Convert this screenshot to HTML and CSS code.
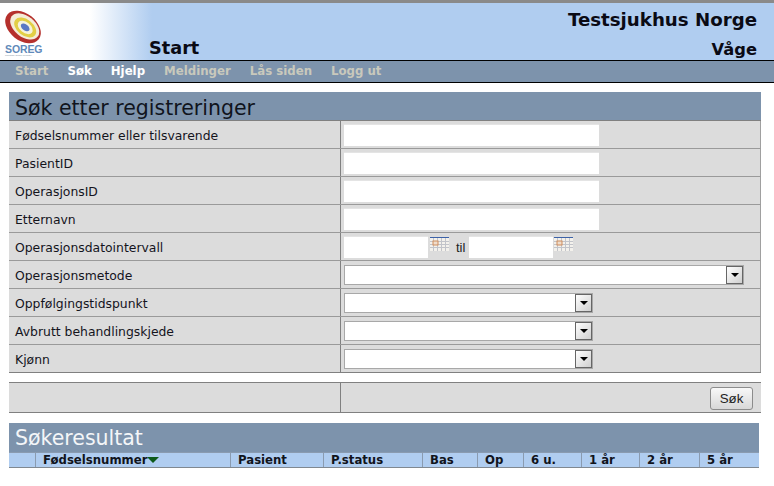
FILE: index.html
```html
<!DOCTYPE html>
<html lang="no">
<head>
<meta charset="utf-8">
<title>Søk</title>
<link rel="stylesheet" href="styles.css">
</head>
<body>
<header class="top">
  <div class="brand">
    <svg class="logo" width="38" height="34" viewBox="0 0 38 34">
      <g transform="rotate(38 18 17)">
        <ellipse cx="18" cy="17" rx="20" ry="13.5" fill="#b5302c"/>
        <ellipse cx="19" cy="15.5" rx="16.5" ry="10.5" fill="#f4ecd8"/>
        <ellipse cx="20" cy="16" rx="12.5" ry="8" fill="#e2cf45"/>
        <ellipse cx="20" cy="16" rx="8.5" ry="5.3" fill="#f6f3dc"/>
        <ellipse cx="20" cy="16" rx="5" ry="3" fill="#5a78c4"/>
      </g>
    </svg>
    <div class="soreg">SOREG</div>
    <div class="soreg-sub">Swedish Organ Registry</div>
  </div>
  <div class="page-title">Start</div>
  <div class="site">
    <div class="hospital">Testsjukhus Norge</div>
    <div class="place">Våge</div>
  </div>
</header>
<nav class="nav">
  <a class="off">Start</a><a>Søk</a><a>Hjelp</a><a class="off">Meldinger</a><a class="off">Lås siden</a><a class="off">Logg ut</a>
</nav>
<main class="main">
  <section class="panel">
    <h1 class="title dark">Søk etter registreringer</h1>
    <div class="row"><div class="label">Fødselsnummer eller tilsvarende</div><div class="field"><span class="input"></span></div></div>
    <div class="row"><div class="label">PasientID</div><div class="field"><span class="input"></span></div></div>
    <div class="row"><div class="label">OperasjonsID</div><div class="field"><span class="input"></span></div></div>
    <div class="row"><div class="label">Etternavn</div><div class="field"><span class="input"></span></div></div>
    <div class="row"><div class="label">Operasjonsdatointervall</div><div class="field">
      <span class="input date"></span>
      <svg class="cal" width="19" height="14" viewBox="0 0 19 14"><rect width="19" height="1" fill="#3c62a8"/><rect y="1" width="19" height="13" fill="#f3f1ec"/><path d="M0 4.5h19M0 7.5h19M0 10.5h19M3.5 1v13M7.5 1v13M11.5 1v13M15.5 1v13" stroke="#c2c4ca"/><rect x="3" y="4" width="5" height="4" fill="#efdccb" stroke="#cf8d5c"/></svg>
      <span class="til">til</span>
      <span class="input date"></span>
      <svg class="cal cal-end" width="19" height="14" viewBox="0 0 19 14"><rect width="19" height="1" fill="#3c62a8"/><rect y="1" width="19" height="13" fill="#f3f1ec"/><path d="M0 4.5h19M0 7.5h19M0 10.5h19M3.5 1v13M7.5 1v13M11.5 1v13M15.5 1v13" stroke="#c2c4ca"/><rect x="3" y="4" width="5" height="4" fill="#efdccb" stroke="#cf8d5c"/></svg>
    </div></div>
    <div class="row"><div class="label">Operasjonsmetode</div><div class="field"><div class="select wide"><span class="sel-text"></span><span class="arrow"><i></i></span></div></div></div>
    <div class="row"><div class="label">Oppfølgingstidspunkt</div><div class="field"><div class="select"><span class="sel-text"></span><span class="arrow"><i></i></span></div></div></div>
    <div class="row"><div class="label">Avbrutt behandlingskjede</div><div class="field"><div class="select"><span class="sel-text"></span><span class="arrow"><i></i></span></div></div></div>
    <div class="row last"><div class="label">Kjønn</div><div class="field"><div class="select"><span class="sel-text"></span><span class="arrow"><i></i></span></div></div></div>
  </section>
  <section class="actions">
    <div class="action-left"></div>
    <div class="action-right"><button class="btn" type="button">Søk</button></div>
  </section>
  <section class="results">
    <h2 class="title light">Søkeresultat</h2>
    <div class="thead">
      <div class="th c0"></div>
      <div class="th c1">Fødselsnummer<i class="sort"></i></div>
      <div class="th c2">Pasient</div>
      <div class="th c3">P.status</div>
      <div class="th c4">Bas</div>
      <div class="th c5">Op</div>
      <div class="th c6">6 u.</div>
      <div class="th c7">1 år</div>
      <div class="th c8">2 år</div>
      <div class="th c9">5 år</div>
    </div>
  </section>
</main>
</body>
</html>
```
FILE: styles.css
```css
* { box-sizing: border-box; }
html, body { margin: 0; padding: 0; }
body {
  width: 774px;
  height: 486px;
  overflow: hidden;
  background: #fff;
  font-family: "DejaVu Sans", Verdana, sans-serif;
  color: #000;
}
.top {
  height: 61px;
  display: flex;
  border-top: 3px solid #8a8a8a;
  border-bottom: 1px solid #000;
  background: linear-gradient(90deg, #fff 0, #fff 90px, #b0cdf0 152px, #b0cdf0 100%);
}
.brand { width: 149px; padding: 7px 0 0 5px; }
.logo { display: block; }
.soreg {
  font: bold 10.5px/10px "Liberation Sans", sans-serif;
  color: #5f8aba;
  margin-top: 0;
  letter-spacing: -.1px;
}
.soreg-sub {
  font: 2.5px/3px "Liberation Sans", sans-serif;
  color: #8a97a8;
  white-space: nowrap;
}
.page-title {
  font-size: 17.7px;
  font-weight: bold;
  line-height: 20px;
  margin-top: 35px;
  color: #0a0a14;
}
.site { margin-left: auto; padding: 6px 17px 0 0; text-align: right; font-weight: bold; color: #0a0a14; }
.hospital { font-size: 18.2px; line-height: 22px; }
.place { font-size: 16.3px; line-height: 20px; margin-top: 9px; }
.nav {
  height: 22px;
  display: flex;
  gap: 19px;
  padding-left: 15px;
  background: #7d93ac;
  border-bottom: 1px solid #000;
  font-size: 11.75px;
  font-weight: bold;
  line-height: 21px;
  color: #fff;
}
.nav .off { color: #c9c9bc; }
.main { padding: 9px 13px 0 9px; }
.panel { width: 752px; border-bottom: 1px solid #808080; }
.title {
  margin: 0;
  height: 29px;
  padding-left: 6px;
  background: #7d93ac;
  font-weight: normal;
  font-size: 20.5px;
  line-height: 30px;
}
.title.dark { color: #10141c; border-bottom: 1px solid #808080; line-height: 32px; }
.title.light { color: #f4f6f8; }
.row {
  height: 28px;
  display: flex;
  background: #dcdcdc;
  border-bottom: 1px solid #9a9a9a;
  border-right: 1px solid #a0a0a0;
}
.row.last { border-bottom: 0; height: 27px; }
.label {
  width: 332px;
  padding-left: 6px;
  border-right: 1px solid #808080;
  font-size: 12.4px;
  line-height: 29px;
  color: #14141c;
}
.field { flex: 1; display: flex; align-items: center; padding-left: 3px; }
.input {
  width: 255px;
  height: 22px;
  background: #fff;
  border-top: 1px solid #e4e4e4;
  display: block;
}
.input.date { width: 84px; }
.cal { margin: -6px 0 0 2px; }
.cal-end { margin-left: 1px; }
.til { font: 13px/20px "Liberation Sans", sans-serif; margin: 2px 2px 0 7px; width: 11px; color: #222; }
.select {
  width: 249px;
  height: 20px;
  display: flex;
  background: #fff;
  border: 1px solid #a8a8a8;
}
.select.wide { width: 400px; }
.sel-text { flex: 1; }
.arrow {
  width: 17px;
  height: 18px;
  display: flex;
  align-items: center;
  justify-content: center;
  background: linear-gradient(135deg, #fff, #cfcfcf);
  border: 1px solid #666;
}
.arrow i {
  width: 0;
  height: 0;
  border-left: 4px solid transparent;
  border-right: 4px solid transparent;
  border-top: 4px solid #000;
}
.actions {
  width: 752px;
  height: 31px;
  margin-top: 9px;
  display: flex;
  background: #dcdcdc;
  border-top: 1px solid #808080;
  border-bottom: 1px solid #808080;
}
.action-left { width: 332px; border-right: 1px solid #808080; }
.action-right { flex: 1; display: flex; justify-content: flex-end; align-items: center; padding: 2px 8px 0 0; }
.btn {
  width: 43px;
  height: 23px;
  padding: 0;
  border: 1px solid #8c8c8c;
  border-radius: 3px;
  background: linear-gradient(180deg, #f8f8f8, #d8d8d8);
  font: 13.3px "Liberation Sans", sans-serif;
  color: #222;
}
.results { width: 750px; margin-top: 10px; }
.thead {
  height: 16px;
  display: flex;
  background: #b0cdf0;
  border-top: 1px solid #8a9bb0;
  border-bottom: 1px solid #808890;
  font-size: 11.7px;
  font-weight: bold;
  line-height: 15px;
  color: #10141c;
}
.th { padding-left: 7px; border-right: 1px solid #8a9bb0; white-space: nowrap; }
.th:last-child { border-right: 0; }
.c0 { width: 27px; }
.c1 { width: 195px; }
.c2 { width: 93px; }
.c3 { width: 99px; }
.c4 { width: 55px; }
.c5 { width: 46px; }
.c6 { width: 58px; }
.c7 { width: 58px; }
.c8 { width: 60px; }
.c9 { width: 59px; }
.sort {
  display: inline-block;
  width: 0;
  height: 0;
  border-left: 6px solid transparent;
  border-right: 6px solid transparent;
  border-top: 6px solid #0d5a1a;
  vertical-align: 1px;
}
```
